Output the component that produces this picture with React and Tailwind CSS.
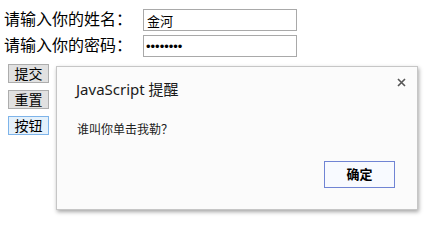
import React from "react";

const cjk = "font-['Liberation_Sans','Noto_Sans_CJK_SC',sans-serif]";

const Field = ({ label, children }) => (
  <div className="flex items-center h-[22px]">
    <span className="w-[139px] text-[16px] leading-none text-black">{label}</span>
    {children}
  </div>
);

const App = () => {
  return (
    <div className={`relative w-[441px] h-[222px] overflow-hidden bg-white ${cjk}`}>
      {/* form */}
      <div className="flex flex-col pl-[4px] pt-[9px]">
        <div className="flex flex-col gap-[4px]">
          <Field label="请输入你的姓名：">
            <input
              readOnly
              value="金河"
              className={`w-[154px] h-[22px] border border-[#a9a9a9] bg-white px-[3px] text-[13px] text-black outline-none ${cjk}`}
            />
          </Field>
          <Field label="请输入你的密码：">
            <input
              readOnly
              type="password"
              value="12345678"
              className="w-[154px] h-[22px] border border-[#a9a9a9] bg-white px-[2px] text-[13px] text-black outline-none font-['Liberation_Sans',sans-serif]"
            />
          </Field>
        </div>

        {/* buttons */}
        <div className="flex flex-col gap-[7px] mt-[7px] ml-[4px]">
          <button className="w-[41px] h-[19px] border border-[#adadad] bg-[#e1e1e1] text-[14px] leading-none text-black">
            提交
          </button>
          <button className="w-[41px] h-[19px] border border-[#adadad] bg-[#e1e1e1] text-[14px] leading-none text-black">
            重置
          </button>
          <button className="w-[41px] h-[19px] border border-[#7eb4ea] bg-[#e5f1fb] text-[14px] leading-none text-black">
            按钮
          </button>
        </div>
      </div>

      {/* alert dialog */}
      <div className="absolute left-[56px] top-[66px] w-[362px] h-[144px] border border-[#c6c6c6] bg-[#fbfbfb] shadow-[1px_2px_4px_rgba(0,0,0,0.35)] flex flex-col">
        <button className="absolute right-[11px] top-[10px] w-[10px] h-[10px] flex items-center justify-center">
          <svg width="9" height="9" viewBox="0 0 9 9">
            <path d="M1 1 L8 8 M8 1 L1 8" stroke="#555" strokeWidth="1.6" />
          </svg>
        </button>
        <div className="pl-[19px] pt-[12px] text-[15px] leading-[20px] text-[#1a1a1a] font-['Noto_Sans','Noto_Sans_CJK_SC',sans-serif]">
          JavaScript 提醒
        </div>
        <div className="pl-[20px] mt-[23px] text-[12px] leading-[16px] text-[#222]">
          谁叫你单击我勒？
        </div>
        <div className="flex justify-end pr-[22px] mt-auto pb-[21px]">
          <button className="w-[71px] h-[27px] border border-[#7084d4] bg-[#f8faff] text-[13px] font-semibold leading-none text-black">
            确定
          </button>
        </div>
      </div>
    </div>
  );
};

export default App;
